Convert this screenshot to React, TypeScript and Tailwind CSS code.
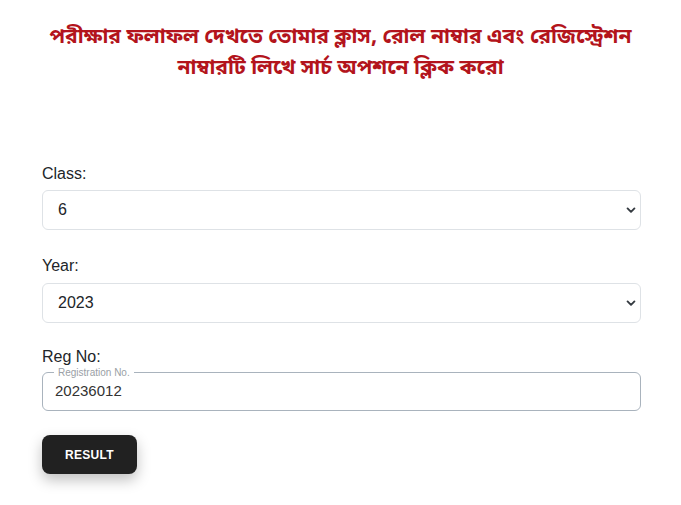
import React from "react";

const Chevron = () => (
  <svg width="10" height="10" viewBox="0 0 16 16" className="text-[#343a40]">
    <path d="M2.5 5.5l5.5 5.5 5.5-5.5" fill="none" stroke="currentColor" strokeWidth="3" strokeLinecap="round" strokeLinejoin="round" />
  </svg>
);

const SelectBox = ({ value }: { value: string }) => (
  <div className="flex h-10 items-center justify-between rounded-md border border-[#dee2e6] bg-white pl-[15px] pr-[4px] text-base text-[#212529]">
    <span>{value}</span>
    <Chevron />
  </div>
);

const App = () => {
  return (
    <div className="min-h-[505px] bg-white font-['Liberation_Sans',Arial,sans-serif]">
      <h1 className="pt-[23px] text-center text-[21px] font-bold leading-[31px] text-[#b3141c] font-['Noto_Sans_Bengali','Noto_Sans','Liberation_Sans',sans-serif]">
        পরীক্ষার ফলাফল দেখতে তোমার ক্লাস, রোল নাম্বার এবং রেজিস্ট্রেশন
        <br />
        নাম্বারটি লিখে সার্চ অপশনে ক্লিক করো
      </h1>

      <div className="mt-[77px] pl-[42px] pr-[40px]">
        <div className="text-base leading-6 text-[#212529]">Class:</div>
        <div className="mt-1">
          <SelectBox value="6" />
        </div>

        <div className="mt-6 text-base leading-6 text-[#212529]">Year:</div>
        <div className="mt-[5px]">
          <SelectBox value="2023" />
        </div>

        <div className="mt-[23px] text-base leading-[21px] text-[#212529]">Reg No:</div>
        <fieldset className="rounded-md border border-[#a9b3bd] px-3 pt-[3px] pb-[9px]">
          <legend className="ml-[-1px] px-1 text-[10px] leading-[11px] text-[#9aa0a6]">Registration No.</legend>
          <div className="text-[15px] leading-5 text-[#333]">20236012</div>
        </fieldset>

        <button className="mt-[24px] flex h-[39px] w-[95px] items-center justify-center rounded-lg bg-[#212121] text-[12px] font-bold tracking-[0.3px] text-white shadow-[0_6px_14px_rgba(0,0,0,0.25)]">
          RESULT
        </button>
      </div>
    </div>
  );
};

export default App;
